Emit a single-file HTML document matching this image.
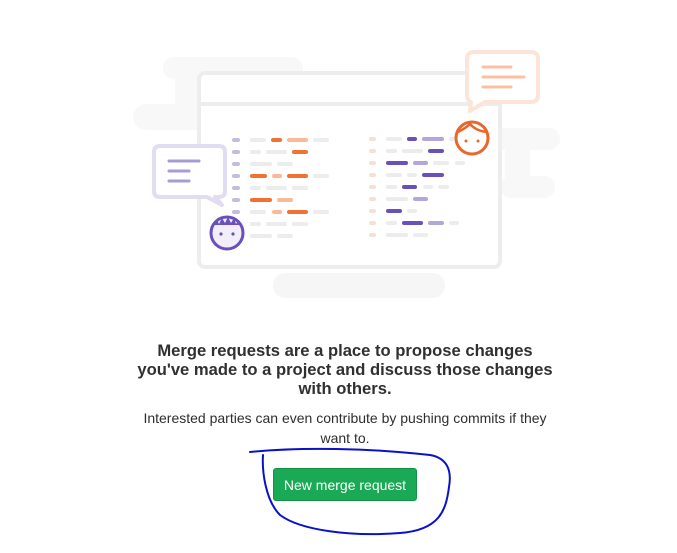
<!DOCTYPE html>
<html><head><meta charset="utf-8"><style>
html,body{margin:0;padding:0;background:#fff;width:677px;height:553px;overflow:hidden;font-family:"Liberation Sans",sans-serif}
svg{position:absolute;left:0;top:0}
h2{position:absolute;left:0;width:690px;top:341px;margin:0;text-align:center;font-size:16.6px;font-weight:bold;line-height:19px;color:#303030}
p{position:absolute;left:0;width:690px;top:408px;margin:0;text-align:center;font-size:14px;line-height:20px;color:#2e2e2e}
.btn{position:absolute;left:273px;top:468px;width:144px;height:33px;background:#1aaa55;border-radius:3px;color:#fff;font-size:14px;line-height:33px;text-align:center;border:1px solid #168f48;box-sizing:border-box}
</style></head><body>
<svg width="677" height="553" viewBox="0 0 677 553">
<g fill="#f8f8f8">
<rect x="163" y="57" width="140" height="22" rx="11"/>
<rect x="175" y="75" width="40" height="35" />
<rect x="133" y="104" width="160" height="26" rx="13"/>
<rect x="490" y="128" width="70" height="22" rx="11"/>
<rect x="500" y="176" width="55" height="22" rx="11"/>
<rect x="505" y="145" width="25" height="35"/>
</g>
<rect x="273" y="273" width="172" height="25" rx="12" fill="#f6f6f6"/>
<rect x="199" y="73" width="301" height="194" rx="6" fill="#fff" stroke="#ededed" stroke-width="4"/>
<line x1="199" y1="104" x2="500" y2="104" stroke="#ededed" stroke-width="4"/>
<g stroke-width="4" stroke-linecap="round" fill="none">
<g stroke="#c4bde2"><line x1="234" y1="140" x2="238" y2="140"/><line x1="234" y1="152" x2="238" y2="152"/><line x1="234" y1="164" x2="238" y2="164"/><line x1="234" y1="176" x2="238" y2="176"/><line x1="234" y1="188" x2="238" y2="188"/><line x1="234" y1="200" x2="238" y2="200"/><line x1="234" y1="212" x2="238" y2="212"/></g>
<g stroke="#f7e0d6"><line x1="371" y1="139" x2="374" y2="139"/><line x1="371" y1="151" x2="374" y2="151"/><line x1="371" y1="163" x2="374" y2="163"/><line x1="371" y1="175" x2="374" y2="175"/><line x1="371" y1="187" x2="374" y2="187"/><line x1="371" y1="199" x2="374" y2="199"/><line x1="371" y1="211" x2="374" y2="211"/><line x1="371" y1="223" x2="374" y2="223"/><line x1="371" y1="235" x2="374" y2="235"/></g>
<g stroke="#ececec">
<line x1="252" y1="140" x2="264" y2="140"/><line x1="315" y1="140" x2="327" y2="140"/>
<line x1="252" y1="152" x2="259" y2="152"/><line x1="268" y1="152" x2="285" y2="152"/>
<line x1="252" y1="164" x2="270" y2="164"/><line x1="279" y1="164" x2="291" y2="164"/>
<line x1="315" y1="176" x2="327" y2="176"/>
<line x1="252" y1="188" x2="259" y2="188"/><line x1="268" y1="188" x2="285" y2="188"/><line x1="294" y1="188" x2="306" y2="188"/>
<line x1="252" y1="212" x2="264" y2="212"/><line x1="315" y1="212" x2="327" y2="212"/>
<line x1="252" y1="224" x2="259" y2="224"/><line x1="268" y1="224" x2="285" y2="224"/><line x1="294" y1="224" x2="306" y2="224"/>
<line x1="252" y1="236" x2="270" y2="236"/><line x1="279" y1="236" x2="291" y2="236"/>
<line x1="388" y1="139" x2="400" y2="139"/><line x1="451" y1="139" x2="458" y2="139"/>
<line x1="388" y1="151" x2="395" y2="151"/><line x1="404" y1="151" x2="421" y2="151"/>
<line x1="435" y1="163" x2="447" y2="163"/><line x1="457" y1="163" x2="463" y2="163"/>
<line x1="388" y1="175" x2="400" y2="175"/><line x1="409" y1="175" x2="415" y2="175"/>
<line x1="388" y1="187" x2="395" y2="187"/><line x1="425" y1="187" x2="431" y2="187"/><line x1="440" y1="187" x2="447" y2="187"/>
<line x1="388" y1="199" x2="406" y2="199"/>
<line x1="409" y1="211" x2="415" y2="211"/>
<line x1="388" y1="223" x2="395" y2="223"/><line x1="451" y1="223" x2="457" y2="223"/>
<line x1="388" y1="235" x2="406" y2="235"/><line x1="415" y1="235" x2="426" y2="235"/>
</g>
<g stroke="#f07131">
<line x1="273" y1="140" x2="280" y2="140"/><line x1="294" y1="152" x2="306" y2="152"/>
<line x1="252" y1="176" x2="265" y2="176"/><line x1="289" y1="176" x2="306" y2="176"/>
<line x1="252" y1="200" x2="270" y2="200"/><line x1="289" y1="212" x2="306" y2="212"/>
</g>
<g stroke="#fbb99a">
<line x1="289" y1="140" x2="306" y2="140"/><line x1="274" y1="176" x2="280" y2="176"/>
<line x1="279" y1="200" x2="291" y2="200"/><line x1="274" y1="212" x2="280" y2="212"/>
</g>
<g stroke="#6b4fbb">
<line x1="409" y1="139" x2="415" y2="139"/><line x1="430" y1="151" x2="442" y2="151"/>
<line x1="388" y1="163" x2="406" y2="163"/><line x1="424" y1="175" x2="442" y2="175"/>
<line x1="404" y1="187" x2="415" y2="187"/><line x1="388" y1="211" x2="400" y2="211"/>
<line x1="404" y1="223" x2="421" y2="223"/>
</g>
<g stroke="#b3a6dc">
<line x1="424" y1="139" x2="442" y2="139"/><line x1="415" y1="163" x2="426" y2="163"/>
<line x1="415" y1="199" x2="426" y2="199"/><line x1="430" y1="223" x2="442" y2="223"/>
</g>
</g>
<path d="M160 146 H219 Q225 146 225 152 V191 Q225 197 219 197 H215 L222 205 L207 197 H160 Q154 197 154 191 V152 Q154 146 160 146 Z" fill="#fff" stroke="#e1dcf2" stroke-width="4" stroke-linejoin="round"/>
<g stroke="#a99bd6" stroke-width="3" stroke-linecap="round"><line x1="169" y1="161" x2="199" y2="161"/><line x1="169" y1="171" x2="189" y2="171"/><line x1="169" y1="181" x2="189" y2="181"/></g>
<path d="M474 52 H531 Q538 52 538 59 V95 Q538 102 531 102 H485 L470 111 L471 102 Q467 100 467 95 V59 Q467 52 474 52 Z" fill="#fff" stroke="#fde4d8" stroke-width="4" stroke-linejoin="round"/>
<g stroke="#fcbfa0" stroke-width="3" stroke-linecap="round"><line x1="483" y1="67" x2="511" y2="67"/><line x1="483" y1="77" x2="524" y2="77"/><line x1="483" y1="87" x2="511" y2="87"/></g>
<circle cx="472" cy="138" r="16" fill="#fff" stroke="#e9672b" stroke-width="3"/>
<path d="M458 132 Q466 128 470 124 Q476 131 487 132" fill="none" stroke="#e9672b" stroke-width="2.5"/>
<circle cx="466" cy="141" r="1.5" fill="#e9672b"/><circle cx="478" cy="141" r="1.5" fill="#e9672b"/>
<circle cx="227" cy="233" r="16" fill="#f1eef9" stroke="#6b4fbb" stroke-width="3"/>
<path d="M213 225 L217 220 L219 224 L222 218 L225 223 L228 217 L231 223 L234 218 L236 224 L239 220 L242 225 Z" fill="#6b4fbb"/>
<circle cx="221" cy="234" r="1.6" fill="#6b4fbb"/><circle cx="233" cy="234" r="1.6" fill="#6b4fbb"/>
<path d="M250 452 C300 447 370 448 430 455 C447 458 452 470 449 487 C446 510 440 530 400 533 C350 537 300 530 280 515 C265 500 262 470 263 455" fill="none" stroke="#0a12c8" stroke-width="2" stroke-linecap="round"/>
</svg>
<h2>Merge requests are a place to propose changes<br>you've made to a project and discuss those changes<br>with others.</h2>
<p>Interested parties can even contribute by pushing commits if they<br>want to.</p>
<div class="btn">New merge request</div>
</body></html>
